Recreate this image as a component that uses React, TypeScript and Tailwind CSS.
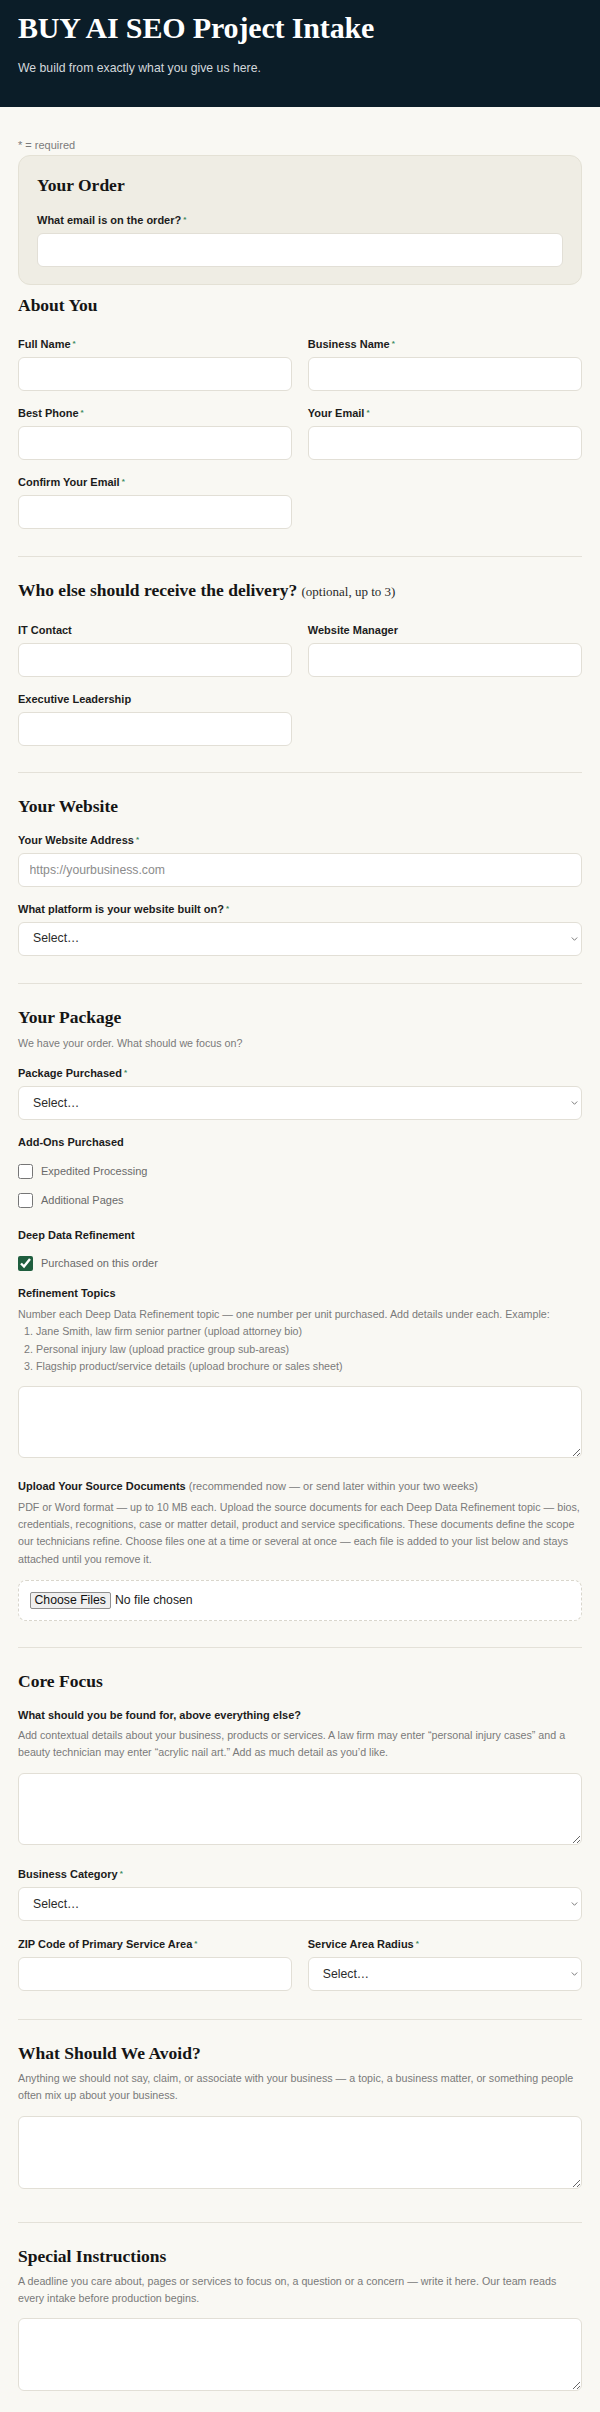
import React from "react";

const serif = "font-['Liberation_Serif','Times_New_Roman',serif]";

function Req() {
  return <span className="relative top-[-2px] ml-[2px] text-[8px] leading-none text-[#3d8a60]">*</span>;
}

function Label({ text, required, className = "" }: { text: string; required?: boolean; className?: string }) {
  return (
    <label className={`block text-[11px] font-bold leading-[14px] text-[#1c1c1c] ${className}`}>
      {text}
      {required ? <Req /> : null}
    </label>
  );
}

function Heading({ children, className = "" }: { children: React.ReactNode; className?: string }) {
  return (
    <h2 className={`${serif} text-[17.5px] font-bold leading-[22px] text-[#151515] ${className}`}>{children}</h2>
  );
}

function Helper({ children, className = "" }: { children: React.ReactNode; className?: string }) {
  return <p className={`text-[10.7px] leading-[17.2px] text-[#7a7a7a] ${className}`}>{children}</p>;
}

const boxBase = "block w-full rounded-[6px] border border-[#e2dfd6] bg-white text-[12.25px] text-[#2b2b2b] outline-none";

function TextInput({ placeholder }: { placeholder?: string }) {
  return (
    <input
      type="text"
      placeholder={placeholder}
      className={`${boxBase} mt-[6px] h-[34px] px-[10.5px] placeholder:text-[#8c8c8c]`}
    />
  );
}

function SelectBox() {
  return (
    <div className="relative mt-[6px]">
      <select defaultValue="" className={`${boxBase} h-[34px] appearance-none pl-[14px] pr-[20px]`}>
        <option value="">Select…</option>
      </select>
      <svg
        className="pointer-events-none absolute right-[4px] top-1/2 -translate-y-1/2"
        width="7"
        height="5"
        viewBox="0 0 7 5"
        fill="none"
      >
        <path d="M0.8 1 L3.5 3.8 L6.2 1" stroke="#7d7d7d" strokeWidth="1" />
      </svg>
    </div>
  );
}

function Area({ className = "" }: { className?: string }) {
  return <textarea className={`${boxBase} h-[72px] px-[10.5px] py-[8px] ${className}`} />;
}

function Field({ label, required, select, placeholder, className = "" }: {
  label: string;
  required?: boolean;
  select?: boolean;
  placeholder?: string;
  className?: string;
}) {
  return (
    <div className={className}>
      <Label text={label} required={required} />
      {select ? <SelectBox /> : <TextInput placeholder={placeholder} />}
    </div>
  );
}

function Check({ label, checked }: { label: string; checked?: boolean }) {
  return (
    <label className="flex h-[20px] items-center gap-[8px] text-[11px] text-[#6a6a6a]">
      <input
        type="checkbox"
        defaultChecked={checked}
        className="m-0 h-[15px] w-[15px] accent-[#1f5e3e]"
      />
      {label}
    </label>
  );
}

function Divider() {
  return <div className="h-px bg-[#e4e1d8]" />;
}

export default function App() {
  return (
    <div className="min-h-screen bg-[#f9f8f3] font-['Liberation_Sans',Arial,sans-serif] text-[#1c1c1c]">
      <header className="h-[107px] bg-[#0b1d28] px-[18px] pt-[10px]">
        <h1 className={`${serif} text-[30px] font-bold leading-[36px] tracking-[-0.005em] text-white`}>
          BUY AI SEO Project Intake
        </h1>
        <p className="mt-[13px] text-[12.25px] leading-[18px] text-[#d3d8dc]">
          We build from exactly what you give us here.
        </p>
      </header>

      <main className="px-[18px] pb-[40px] pt-[31px]">
        <p className="text-[11px] leading-[14px] text-[#7b7b7b]">* = required</p>

        <section className="mt-[3px] rounded-[12px] border border-[#e4e1d5] bg-[#efede4] px-[18px] pb-[17px] pt-[18px]">
          <Heading>Your Order</Heading>
          <Field className="mt-[16.5px]" label="What email is on the order?" required />
        </section>

        <section className="pb-[27px] pt-[9px]">
          <Heading>About You</Heading>
          <div className="mt-[21px] grid grid-cols-2 gap-x-[15.5px] gap-y-[15px]">
            <Field label="Full Name" required />
            <Field label="Business Name" required />
            <Field label="Best Phone" required />
            <Field label="Your Email" required />
            <Field label="Confirm Your Email" required />
          </div>
        </section>

        <Divider />

        <section className="pb-[26px] pt-[22px]">
          <Heading>
            Who else should receive the delivery?{" "}
            <span className="text-[13px] font-normal text-[#2a2a2a]">(optional, up to 3)</span>
          </Heading>
          <div className="mt-[20px] grid grid-cols-2 gap-x-[15.5px] gap-y-[15px]">
            <Field label="IT Contact" />
            <Field label="Website Manager" />
            <Field label="Executive Leadership" />
          </div>
        </section>

        <Divider />

        <section className="pb-[27.5px] pt-[22px]">
          <Heading>Your Website</Heading>
          <Field className="mt-[16px]" label="Your Website Address" required placeholder="https://yourbusiness.com" />
          <Field className="mt-[15px]" label="What platform is your website built on?" required select />
        </section>

        <Divider />

        <section className="pb-[26.3px] pt-[22px]">
          <Heading>Your Package</Heading>
          <Helper className="mt-[6.5px]">We have your order. What should we focus on?</Helper>
          <Field className="mt-[14px]" label="Package Purchased" required select />

          <Label className="mt-[15px]" text="Add-Ons Purchased" />
          <div className="mt-[13px] flex flex-col gap-[8.5px]">
            <Check label="Expedited Processing" />
            <Check label="Additional Pages" />
          </div>

          <Label className="mt-[17.3px]" text="Deep Data Refinement" />
          <div className="mt-[12px]">
            <Check label="Purchased on this order" checked />
          </div>

          <Label className="mt-[12.7px]" text="Refinement Topics" />
          <div className="mt-[6.2px] text-[10.7px] leading-[17.1px] text-[#7a7a7a]">
            <p>
              Number each Deep Data Refinement topic — one number per unit purchased. Add details under each. Example:
            </p>
            <ol className="list-decimal pl-[18px]">
              <li>Jane Smith, law firm senior partner (upload attorney bio)</li>
              <li>Personal injury law (upload practice group sub-areas)</li>
              <li>Flagship product/service details (upload brochure or sales sheet)</li>
            </ol>
          </div>
          <Area className="mt-[10.8px]" />

          <label className="mt-[21.3px] block text-[11px] leading-[14px]">
            <span className="font-bold text-[#1c1c1c]">Upload Your Source Documents</span>{" "}
            <span className="text-[#7a7a7a]">(recommended now — or send later within your two weeks)</span>
          </label>
          <Helper className="mt-[5.7px] leading-[17.4px]">
            PDF or Word format — up to 10 MB each. Upload the source documents for each Deep Data Refinement topic — bios,
            credentials, recognitions, case or matter detail, product and service specifications. These documents define
            the scope our technicians refine. Choose files one at a time or several at once — each file is added to your
            list below and stays attached until you remove it.
          </Helper>
          <div className="mt-[11.7px] flex h-[40.7px] items-center rounded-[8px] border border-dashed border-[#d9d6cc] bg-white px-[10.5px]">
            <input
              type="file"
              multiple
              accept=".pdf,.doc,.docx"
              className="text-[12.25px] leading-[15px] text-[#1c1c1c] file:mr-[4px] file:rounded-[2px] file:border file:border-solid file:border-[#8f8f8f] file:bg-[#efefef] file:px-[4px] file:py-0 file:text-[12.25px] file:leading-[15px] file:text-[#111]"
            />
          </div>
        </section>

        <Divider />

        <section className="pb-[27.7px] pt-[22px]">
          <Heading>Core Focus</Heading>
          <Label className="mt-[16px]" text="What should you be found for, above everything else?" />
          <Helper className="mt-[5px] leading-[17.3px]">
            Add contextual details about your business, products or services. A law firm may enter “personal injury
            cases” and a beauty technician may enter “acrylic nail art.” Add as much detail as you’d like.
          </Helper>
          <Area className="mt-[11.8px] h-[72.3px]" />
          <Field className="mt-[22px]" label="Business Category" required select />
          <div className="mt-[15.6px] grid grid-cols-2 gap-x-[15.5px]">
            <Field label="ZIP Code of Primary Service Area" required />
            <Field label="Service Area Radius" required select />
          </div>
        </section>

        <Divider />

        <section className="pb-[33px] pt-[22px]">
          <Heading>What Should We Avoid?</Heading>
          <Helper className="mt-[6.5px]">
            Anything we should not say, claim, or associate with your business — a topic, a business matter, or something
            people often mix up about your business.
          </Helper>
          <Area className="mt-[11.2px] h-[73px]" />
        </section>

        <Divider />

        <section className="pt-[22px]">
          <Heading>Special Instructions</Heading>
          <Helper className="mt-[6px] leading-[17.3px]">
            A deadline you care about, pages or services to focus on, a question or a concern — write it here. Our team
            reads every intake before production begins.
          </Helper>
          <Area className="mt-[11px] h-[73px]" />
        </section>
      </main>
    </div>
  );
}
